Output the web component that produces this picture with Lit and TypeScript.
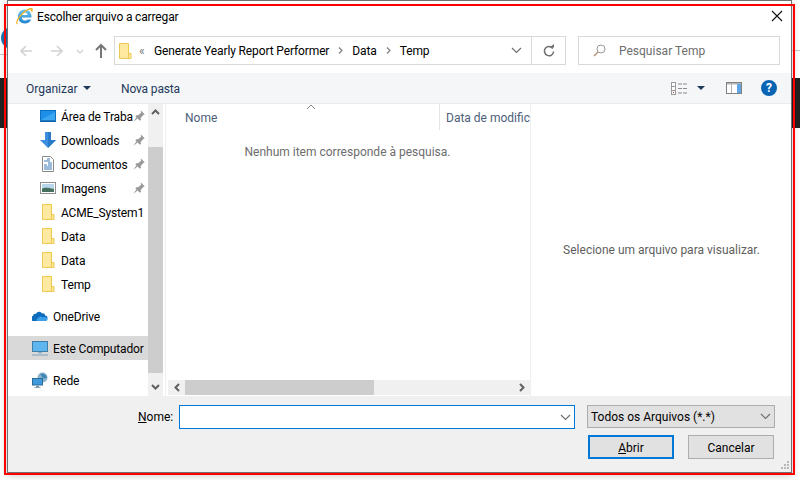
import { LitElement, html, css, svg } from 'lit';
import { customElement } from 'lit/decorators.js';

const folderIcon = html`<svg width="16" height="16" viewBox="0 0 16 16">
  <path d="M2.500 .5h9v15h-9z" fill="#ffe9a0" stroke="#ecc94f"/>
  <path d="M11.500 10.500h2.500v5h-2.500z" fill="#ffe9a0" stroke="#ecc94f"/>
</svg>`;

const pinIcon = html`<svg class="pin" width="12" height="12" viewBox="0.5 0.5 11 11">
  <path d="M7.500 .8l3.700 3.700-1.200.6-2.400 2.600.2 1.800-1 .9-4.200-4.200.9-1 1.800.2 2.600-2.400z" fill="#999"/>
  <path d="M3.800 7.200L.8 11.200l4-3z" fill="#999"/>
</svg>`;

const desktopIcon = html`<svg width="16" height="16" viewBox="0 0 16 16">
  <rect x=".5" y="2.500" width="15" height="11" fill="#1e8fe6" stroke="#0f6fbf"/>
  <path d="M1 12l14-8v9H1z" fill="#3ba7f2"/>
  <path d="M1 13h14" stroke="#0a4f8f"/>
</svg>`;

const downloadIcon = html`<svg width="16" height="16" viewBox="0 0 16 16">
  <path d="M5 0h6v8h5l-8 8-8-8h5z" fill="#3c8fdf"/>
  <path d="M8 0h3v8h5l-8 8z" fill="#2a7ccb"/>
</svg>`;

const docsIcon = html`<svg width="16" height="16" viewBox="0 0 16 16">
  <path d="M2.500 .5h8l3 3v12h-11z" fill="#fff" stroke="#8a8a8a"/>
  <path d="M7 3h3M4 5h6M8 7h4M4 9h3M8 9h4M4 11h8M4 13h8" stroke="#3a78b8"/>
</svg>`;

const imagesIcon = html`<svg width="16" height="16" viewBox="0 0 16 16">
  <rect x=".5" y="2.500" width="15" height="11" fill="#fff" stroke="#8f8f8f"/>
  <rect x="2" y="4" width="12" height="8" fill="#b9d5ea"/>
  <path d="M2 9c3-2 6-1 12 0v3H2z" fill="#45705f"/>
</svg>`;

const cloudIcon = html`<svg width="16" height="16" viewBox="0 0 16 16">
  <path d="M1.500 13a2.500 2.500 0 0 1-.5-5c.3-1.800 1.800-2.500 3-2 .9-2.600 4.600-3 6-.5 1.500-.5 3 .5 3 2 1.700 0 2.500 1 2.500 2.500 0 1.600-1 3-2.500 3z" fill="#0f6cbd"/>
  <path d="M5 13c-1-1.500 0-3 1.500-3 .5-1.500 3-2 4-.5 2-1 5 0 5 1.500 0 1-1 2-2.500 2z" fill="#3aa0e8"/>
</svg>`;

const pcIcon = html`<svg width="16" height="16" viewBox="0 0 16 16">
  <rect x=".5" y="1.500" width="15" height="10" fill="#5fb6ee" stroke="#3f7fa8"/>
  <path d="M6 12h4v1.500H6z" fill="#9bb3c4"/>
  <path d="M0 15h16" stroke="#9bb3c4" stroke-width="1.500"/>
</svg>`;

const netIcon = html`<svg width="16" height="16" viewBox="0 0 16 16">
  <circle cx="10.500" cy="5.500" r="5" fill="#8db4cc"/>
  <path d="M8 2c2 1 1 3 3 4s3 0 4 0a5 5 0 0 0-7-4z" fill="#3f87b5"/>
  <rect x=".5" y="6.500" width="10" height="6.500" fill="#3f9bdc" stroke="#2a6a96"/>
  <path d="M4 14h3v1H4zM2.500 15h6v.8h-6z" fill="#6c8da3"/>
</svg>`;

const ieIcon = html`<svg width="17" height="17" viewBox="0.7 0.5 15.800 15.800">
  <defs><linearGradient id="ieblue" x1="0" y1="0" x2="0" y2="1">
    <stop offset="0" stop-color="#6fc6f2"/><stop offset="1" stop-color="#1f84cc"/>
  </linearGradient></defs>
  <path transform="translate(-0.8 -0.9) scale(1.1)" d="M8.800 2.500c-3.300 0-5.800 2.600-5.800 5.900 0 3.400 2.500 5.900 5.800 5.900 2.500 0 4.500-1.200 5.400-3.400h-3.300c-.5.700-1.200 1-2.100 1-1.300 0-2.400-.9-2.500-2.500h8.200c.3-3.900-2.200-6.900-5.700-6.900zM6.300 7.200c.2-1.300 1.200-2.100 2.500-2.100s2.200.8 2.400 2.100z" fill="url(#ieblue)"/>
  <path d="M1.300 15.500C-.2 14 2 9.500 6 5.500s8.500-5.800 10-4.500c.7.800.3 2.200-.5 3.700-.3-1-.7-1.800-1.300-2.400C15.200 1.300 12 2 8.500 5S2 12 2 14.500c0 .4.100.7.300 1z" fill="#f0b429"/>
</svg>`;

const chevronDown = html`<svg width="11" height="7" viewBox="0 0 11 7">
  <path d="M1 1l4.500 4.500L10 1" fill="none" stroke="#6f6f6f" stroke-width="1.200"/>
</svg>`;

const crumbSep = html`<svg class="crumb-sep" width="5" height="7" viewBox="0 0 5 7">
  <path d="M1 .5l3 3-3 3" fill="none" stroke="#8a8a8a" stroke-width="1.400"/>
</svg>`;

function navArrow(d: string, color: string, width = 2) {
  return svg`<path d=${d} fill="none" stroke=${color} stroke-width=${width}/>`;
}

@customElement('app-root')
export class AppRoot extends LitElement {
  static styles = css`
    :host {
      display: block;
      position: relative;
      width: 800px;
      height: 480px;
      overflow: hidden;
      background: #fff;
      font-family: Roboto, 'Noto Sans', sans-serif;
      font-size: 12px;
      color: #000;
    }
    .bg-logo {
      position: absolute;
      left: 1px;
      top: 27px;
      width: 22px;
      height: 22px;
      border-radius: 50%;
      background: #1a76b8;
    }
    .bg-line {
      position: absolute;
      top: 54px;
      left: 0;
      width: 8px;
      height: 1px;
      background: #c8c8c8;
    }
    .bg-line.right {
      top: 50px;
      left: 790px;
      width: 10px;
    }
    .bg-band {
      position: absolute;
      left: 0;
      right: 0;
      top: 78px;
      height: 50px;
      background: #222;
    }
    .window {
      position: absolute;
      left: 7px;
      top: 0;
      width: 785px;
      height: 473px;
      box-sizing: border-box;
      border: 1px solid #707070;
      background: #fff;
      box-shadow: 0 2px 8px rgba(0, 0, 0, 0.25);
      display: flex;
      flex-direction: column;
    }
    .annotation {
      position: absolute;
      left: 4px;
      top: 4px;
      width: 791px;
      height: 471px;
      box-sizing: border-box;
      border: 2px solid #f00;
      pointer-events: none;
    }
    .titlebar {
      height: 29px;
      display: flex;
      align-items: center;
      padding: 1px 0 0 8px;
      box-sizing: border-box;
      gap: 4px;
    }
    .titlebar .title {
      flex: 1;
      padding-top: 1px;
      letter-spacing: -0.15px;
    }
    .close {
      width: 14px;
      height: 14px;
      margin-right: 7px;
    }
    .addressrow {
      height: 43px;
      box-sizing: border-box;
      padding: 6px 11px 8px 0;
      display: flex;
    }
    .navbtns {
      width: 106px;
      flex: none;
    }
    .address {
      width: 418px;
      box-sizing: border-box;
      border: 1px solid #d9d9d9;
      display: flex;
      align-items: center;
      padding-left: 2px;
      flex: none;
    }
    .address .crumb {
      padding-top: 1px;
      letter-spacing: -0.12px;
    }
    .address svg.crumb-sep {
      margin: 0 9px;
    }
    .chev-left {
      margin-left: 6px;
      width: 15px;
      color: #777;
    }
    .address .spacer {
      flex: 1;
    }
    .address .drop {
      margin-right: 9px;
      display: flex;
    }
    .refresh {
      width: 35px;
      margin-left: -1px;
      box-sizing: border-box;
      border: 1px solid #d9d9d9;
      display: flex;
      align-items: center;
      justify-content: center;
      flex: none;
    }
    .search {
      margin-left: 12px;
      flex: 1;
      box-sizing: border-box;
      border: 1px solid #d9d9d9;
      display: flex;
      align-items: center;
      padding-left: 14px;
      gap: 13px;
      color: #6d6d6d;
    }
    .search span {
      padding-top: 1px;
    }
    .toolbar {
      height: 30px;
      box-sizing: border-box;
      background: #f5f6f7;
      display: flex;
      align-items: center;
      padding-left: 18px;
      color: #1e395b;
    }
    .toolbar .tri {
      width: 0;
      height: 0;
      border-left: 4px solid transparent;
      border-right: 4px solid transparent;
      border-top: 4px solid #1e395b;
    }
    .organize {
      width: 57px;
      padding-top: 1px;
    }
    .newfolder {
      margin-left: 30px;
      flex: 1;
      padding-top: 1px;
      letter-spacing: -0.15px;
    }
    .views {
      margin-right: 10px;
    }
    .preview-toggle {
      margin: 0 0 0 21px;
    }
    .help {
      margin: 0 14px 0 19px;
      width: 16px;
      height: 16px;
      border-radius: 50%;
      background: #0a64b4;
      color: #fff;
      font-weight: 700;
      font-size: 12px;
      line-height: 16px;
      text-align: center;
    }
    .main {
      flex: 1;
      display: flex;
      min-height: 0;
      border-top: 1px solid #eaeaea;
    }
    .nav {
      width: 140px;
      flex: none;
      overflow: hidden;
    }
    .nav-item {
      height: 24px;
      display: flex;
      align-items: center;
      white-space: nowrap;
      gap: 5px;
    }
    .nav-item.pinned {
      padding-left: 32px;
    }
    .nav-item.root {
      padding-left: 24px;
    }
    .nav-group {
      margin-bottom: 8px;
    }
    .nav-item.selected {
      background: #d9d9d9;
    }
    .nav-item .label {
      flex: 1;
      min-width: 0;
      padding-top: 1px;
      letter-spacing: -0.15px;
    }
    .pin {
      flex: none;
      margin-right: 3px;
    }
    .vscroll {
      width: 15px;
      flex: none;
      background: #f0f0f0;
      position: relative;
      display: flex;
      flex-direction: column;
    }
    .vscroll .thumb {
      margin-top: 43px;
      height: 226px;
      background: #cdcdcd;
    }
    .vscroll .btn {
      position: absolute;
      left: 0;
      width: 15px;
      height: 16px;
      display: flex;
      align-items: center;
      justify-content: center;
    }
    .vscroll .up {
      top: 0;
    }
    .vscroll .down {
      bottom: 1px;
    }
    .content {
      margin-left: 2px;
      width: 365px;
      flex: none;
      box-sizing: border-box;
      border-left: 1px solid #f0f0f0;
      display: flex;
      flex-direction: column;
      position: relative;
    }
    .header {
      height: 26px;
      display: flex;
      color: #4c607a;
      flex: none;
    }
    .col {
      display: flex;
      align-items: center;
      white-space: nowrap;
      padding-top: 1px;
    }
    .col.name {
      width: 274px;
      box-sizing: border-box;
      padding-left: 19px;
      border-right: 1px solid #e5e5e5;
      position: relative;
    }
    .col.date {
      flex: 1;
      padding-left: 6px;
    }
    .sort {
      position: absolute;
      left: 140px;
      top: 0;
    }
    .body {
      flex: 1;
      text-align: center;
      padding-top: 15px;
      color: #6d6d6d;
      padding-right: 1px;
    }
    .hscroll {
      height: 15px;
      margin: 0 0 1px 2px;
      background: #f0f0f0;
      display: flex;
      align-items: center;
      flex: none;
    }
    .hscroll .btn {
      width: 17px;
      height: 15px;
      display: flex;
      align-items: center;
      justify-content: center;
      flex: none;
    }
    .hscroll .thumb {
      width: 189px;
      height: 15px;
      background: #cdcdcd;
    }
    .hscroll .track {
      flex: 1;
    }
    .preview {
      flex: 1;
      border-left: 1px solid #f0f0f0;
      display: flex;
      align-items: center;
      justify-content: center;
      color: #5f5f5f;
      padding-left: 1px;
    }
    .footer {
      height: 76px;
      flex: none;
      background: #f0f0f0;
      box-sizing: border-box;
      padding-top: 9px;
      position: relative;
    }
    .row {
      display: flex;
      align-items: flex-start;
    }
    .row.fields {
      padding-left: 130px;
    }
    .namelabel {
      width: 41px;
      height: 24px;
      line-height: 25px;
    }
    .input {
      width: 396px;
      height: 24px;
      box-sizing: border-box;
      border: 1px solid #0078d7;
      background: #fff;
      display: flex;
      align-items: center;
      justify-content: flex-end;
      padding-right: 3px;
    }
    .select {
      margin-left: 12px;
      width: 188px;
      height: 23px;
      box-sizing: border-box;
      border: 1px solid #adadad;
      background: #e1e1e1;
      display: flex;
      align-items: center;
      justify-content: space-between;
      padding: 0 3px 0 3px;
    }
    .select span {
      padding-top: 1px;
    }
    .row.actions {
      justify-content: flex-end;
      padding-right: 17px;
      gap: 14px;
      margin-top: 6px;
    }
    .button {
      width: 86px;
      height: 24px;
      box-sizing: border-box;
      border: 1px solid #adadad;
      background: #e1e1e1;
      display: flex;
      align-items: center;
      justify-content: center;
      padding-top: 1px;
    }
    .button.primary {
      border: 2px solid #0078d7;
    }
    .grip {
      position: absolute;
      right: 1px;
      bottom: 2px;
    }
  `;

  private navRow(icon: unknown, label: string, pinned = false, cls = 'pinned') {
    return html`<div class="nav-item ${cls}">
      ${icon}<span class="label">${label}</span>${pinned ? pinIcon : ''}
    </div>`;
  }

  render() {
    return html`
      <div class="bg-logo"></div>
      <div class="bg-line"></div>
      <div class="bg-line right"></div>
      <div class="bg-band"></div>
      <div class="window">
        <div class="titlebar">
          ${ieIcon}
          <span class="title">Escolher arquivo a carregar</span>
          <svg class="close" viewBox="0 0 14 14">
            <path d="M2 2l10 10M12 2L2 12" stroke="#111" stroke-width="1.100" fill="none"/>
          </svg>
        </div>

        <div class="addressrow">
          <div class="navbtns">
            <svg width="106" height="29" viewBox="0 0 106 29">
              ${navArrow('M24 15H13M18 10l-5 5 5 5', '#d2d2d2', 1.6)}
              ${navArrow('M43 15h11M49 10l5 5-5 5', '#d2d2d2', 1.6)}
              ${navArrow('M69 14l3 3 3-3', '#d2d2d2', 1.4)}
              ${navArrow('M93 22V10M88 14l5-5 5 5', '#777', 2)}
            </svg>
          </div>
          <div class="address">
            ${folderIcon}
            <span class="chev-left">«</span>
            <span class="crumb">Generate Yearly Report Performer</span>
            ${crumbSep}
            <span class="crumb">Data</span>
            ${crumbSep}
            <span class="crumb">Temp</span>
            <span class="spacer"></span>
            <span class="drop">${chevronDown}</span>
          </div>
          <div class="refresh">
            <svg width="12" height="14" viewBox="0 0 12 14">
              <path d="M9.800 4.500a4.600 4.600 0 1 0 .8 3" fill="none" stroke="#6f6f6f" stroke-width="1.500"/>
              <path d="M6.500 3.500h4.500V0z" fill="#6f6f6f"/>
            </svg>
          </div>
          <div class="search">
            <svg width="13" height="13" viewBox="0 0 13 13">
              <circle cx="8" cy="5" r="4" fill="none" stroke="#9a9a9a"/>
              <path d="M5 8l-4 4" stroke="#b08a6a" stroke-width="1.300"/>
            </svg>
            <span>Pesquisar Temp</span>
          </div>
        </div>

        <div class="toolbar">
          <span class="organize">Organizar</span>
          <span class="tri"></span>
          <span class="newfolder">Nova pasta</span>
          <svg class="views" width="16" height="13" viewBox="0 0 16 13">
            <rect x=".5" y=".5" width="4" height="12" fill="#fff" stroke="#9a9a9a"/>
            <path d="M1 4.500h3M1 8.500h3" stroke="#9a9a9a"/>
            <rect x="2" y="10" width="1" height="1" fill="#d04040"/>
            <path d="M7 2h4M12 2h4M7 6.500h4M12 6.500h4M7 11h4M12 11h4" stroke="#8a8a8a"/>
          </svg>
          <span class="tri"></span>
          <svg class="preview-toggle" width="16" height="12" viewBox="0 0 16 12">
            <rect x=".5" y=".5" width="15" height="11" fill="#fff" stroke="#808080"/>
            <rect x="1" y="1" width="14" height="1.500" fill="#b5b5b5"/>
            <rect x="11" y="2" width="4" height="9" fill="#5ea6e6"/>
            <path d="M5.500 2v9" stroke="#b5b5b5"/>
          </svg>
          <span class="help">?</span>
        </div>

        <div class="main">
          <div class="nav">
            <div class="nav-group">
              ${this.navRow(desktopIcon, 'Área de Traba', true)}
              ${this.navRow(downloadIcon, 'Downloads', true)}
              ${this.navRow(docsIcon, 'Documentos', true)}
              ${this.navRow(imagesIcon, 'Imagens', true)}
              ${this.navRow(folderIcon, 'ACME_System1')}
              ${this.navRow(folderIcon, 'Data')}
              ${this.navRow(folderIcon, 'Data')}
              ${this.navRow(folderIcon, 'Temp')}
            </div>
            <div class="nav-group">${this.navRow(cloudIcon, 'OneDrive', false, 'root')}</div>
            <div class="nav-group">${this.navRow(pcIcon, 'Este Computador', false, 'root selected')}</div>
            <div class="nav-group">${this.navRow(netIcon, 'Rede', false, 'root')}</div>
          </div>
          <div class="vscroll">
            <div class="btn up">
              <svg width="9" height="6" viewBox="0 0 9 6"><path d="M1 5l3.500-3.500L8 5" fill="none" stroke="#606060" stroke-width="2"/></svg>
            </div>
            <div class="thumb"></div>
            <div class="btn down">
              <svg width="9" height="6" viewBox="0 0 9 6"><path d="M1 1l3.500 3.500L8 1" fill="none" stroke="#606060" stroke-width="2"/></svg>
            </div>
          </div>
          <div class="content">
            <div class="header">
              <div class="col name">
                <svg class="sort" width="10" height="6" viewBox="0 0 10 6"><path d="M1 5l4-4 4 4" fill="none" stroke="#8a8a8a"/></svg>
                Nome
              </div>
              <div class="col date">Data de modific</div>
            </div>
            <div class="body">Nenhum item corresponde à pesquisa.</div>
            <div class="hscroll">
              <div class="btn">
                <svg width="6" height="9" viewBox="0 0 6 9"><path d="M5 1L1.500 4.500 5 8" fill="none" stroke="#606060" stroke-width="2"/></svg>
              </div>
              <div class="thumb"></div>
              <div class="track"></div>
              <div class="btn">
                <svg width="6" height="9" viewBox="0 0 6 9"><path d="M1 1l3.500 3.500L1 8" fill="none" stroke="#606060" stroke-width="2"/></svg>
              </div>
            </div>
          </div>
          <div class="preview">Selecione um arquivo para visualizar.</div>
        </div>

        <div class="footer">
          <div class="row fields">
            <span class="namelabel"><u>N</u>ome:</span>
            <div class="input">${chevronDown}</div>
            <div class="select"><span>Todos os Arquivos (*.*)</span>${chevronDown}</div>
          </div>
          <div class="row actions">
            <div class="button primary"><span><u>A</u>brir</span></div>
            <div class="button">Cancelar</div>
          </div>
          <svg class="grip" width="10" height="10" viewBox="0 0 10 10" fill="#b8b8b8">
            <rect x="7" y="1" width="2" height="2"/>
            <rect x="4" y="4" width="2" height="2"/><rect x="7" y="4" width="2" height="2"/>
            <rect x="1" y="7" width="2" height="2"/><rect x="4" y="7" width="2" height="2"/><rect x="7" y="7" width="2" height="2"/>
          </svg>
        </div>
      </div>
      <div class="annotation"></div>
    `;
  }
}
